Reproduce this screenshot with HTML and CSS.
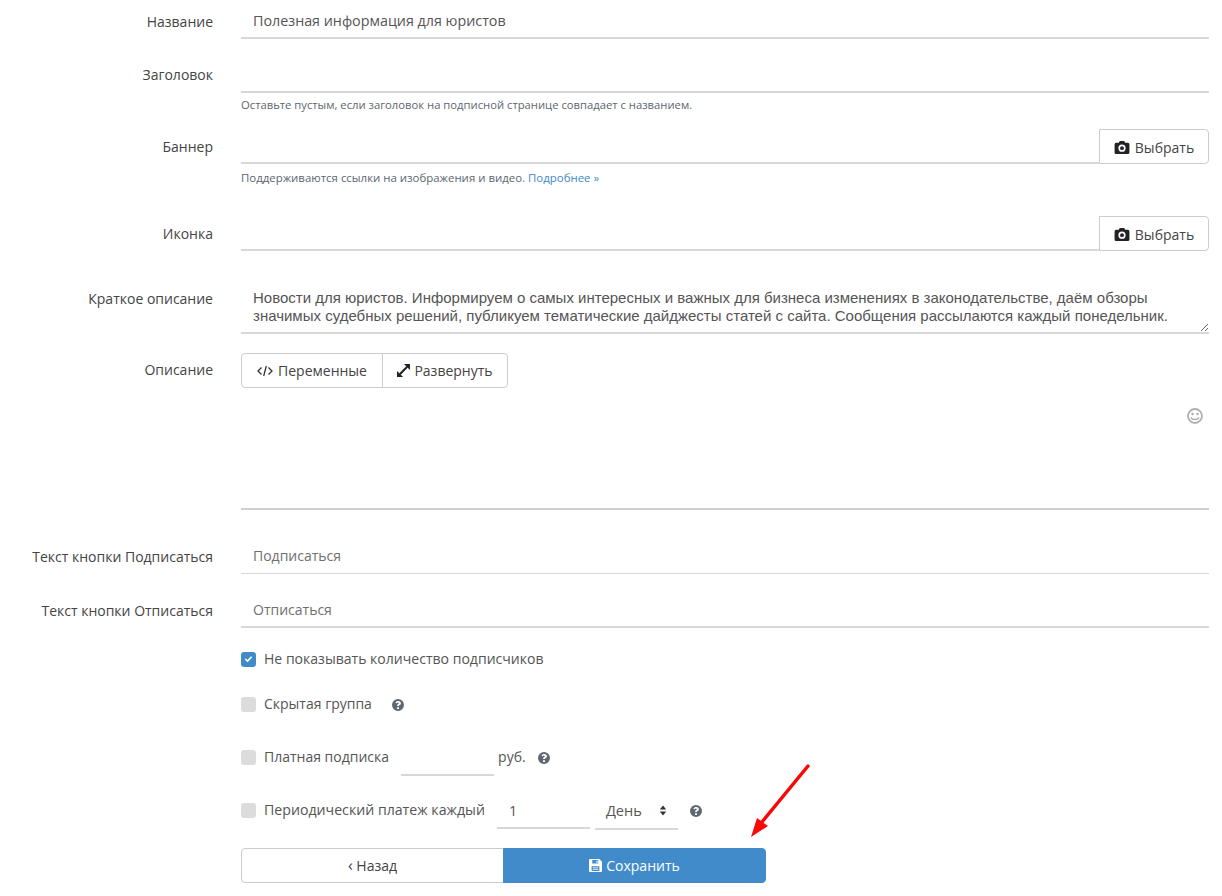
FILE: index.html
```html
<!DOCTYPE html>
<html lang="ru">
<head>
<meta charset="utf-8">
<title>Группа</title>
<link rel="stylesheet" href="styles.css">
</head>
<body>
<svg class="defs" width="0" height="0" aria-hidden="true">
  <symbol id="cam" viewBox="0 0 16 14"><path fill-rule="evenodd" d="M5.600 0h4.800l1 2H14.300a1.700 1.700 0 0 1 1.700 1.700v8.600A1.700 1.700 0 0 1 14.300 14H1.700A1.700 1.700 0 0 1 0 12.300V3.700A1.700 1.700 0 0 1 1.700 2H4.600zM8 3.800a3.900 3.900 0 1 0 0 7.800a3.900 3.900 0 0 0 0-7.800zM8 5.600a2.100 2.100 0 1 1 0 4.200a2.100 2.100 0 0 1 0-4.200z"/></symbol>
  <symbol id="help" viewBox="0 0 12 12"><path fill-rule="evenodd" d="M6 0a6 6 0 1 1 0 12A6 6 0 0 1 6 0zM5 8.300v1.700h2V8.300zM6.100 2C4.800 2 4 2.600 3.400 3.500l1.200.9c.4-.5.700-.8 1.300-.8.500 0 .9.300.9.700 0 .4-.3.600-.8.900-.6.300-1 .8-1 1.500v.4h2v-.3c0-.3.200-.5.600-.7.700-.4 1.300-.9 1.300-1.900C8.900 2.900 7.500 2 6.100 2z"/></symbol>
</svg>
<form class="form">
  <div class="row">
    <label class="label label-low">Название</label>
    <div class="field"><input class="input" type="text" value="Полезная информация для юристов"></div>
  </div>
  <div class="row row-hint">
    <label class="label">Заголовок</label>
    <div class="field">
      <input class="input" type="text">
      <p class="hint">Оставьте пустым, если заголовок на подписной странице совпадает с названием.</p>
    </div>
  </div>
  <div class="row row-banner">
    <label class="label label-low">Баннер</label>
    <div class="field">
      <div class="group">
        <input class="input" type="text">
        <button class="btn pick" type="button"><svg class="i-cam"><use href="#cam"/></svg>Выбрать</button>
      </div>
      <p class="hint hint-wide">Поддерживаются ссылки на изображения и видео. <a href="#">Подробнее »</a></p>
    </div>
  </div>
  <div class="row row-icon">
    <label class="label label-low">Иконка</label>
    <div class="field">
      <div class="group">
        <input class="input" type="text">
        <button class="btn pick" type="button"><svg class="i-cam"><use href="#cam"/></svg>Выбрать</button>
      </div>
    </div>
  </div>
  <div class="row">
    <label class="label label-area">Краткое описание</label>
    <div class="field">
      <textarea class="area">Новости для юристов. Информируем о самых интересных и важных для бизнеса изменениях в законодательстве, даём обзоры значимых судебных решений, публикуем тематические дайджесты статей с сайта. Сообщения рассылаются каждый понедельник.</textarea>
    </div>
  </div>
  <div class="row row-editor">
    <label class="label">Описание</label>
    <div class="field">
      <div class="toolbar">
        <button class="btn tool" type="button">
          <svg class="i-code" viewBox="0 0 16 12"><path d="M4.500 2.500 1 6l3.500 3.500M11.500 2.500 15 6l-3.500 3.500M9.300 1 6.700 11" fill="none" stroke="#333" stroke-width="1.300"/></svg>Переменные</button>
        <button class="btn tool" type="button">
          <svg class="i-exp" viewBox="0 0 14 14"><path d="M7.500 0H14v6.500zM6.500 14H0V7.500z" fill="#222"/><path d="M3 11 11 3" stroke="#222" stroke-width="2.200"/></svg>Развернуть</button>
      </div>
      <div class="editor">
        <svg class="smile" viewBox="0 0 16 16"><circle cx="8" cy="8" r="7" fill="none" stroke="#b0b0b0" stroke-width="1.800"/><circle cx="5.500" cy="6" r="1.200" fill="#aaa"/><circle cx="10.500" cy="6" r="1.200" fill="#aaa"/><path d="M4 9.500c1 2.600 7 2.600 8 0" fill="none" stroke="#aaa" stroke-width="1.300"/></svg>
      </div>
    </div>
  </div>
  <div class="row">
    <label class="label label-low">Текст кнопки Подписаться</label>
    <div class="field"><input class="input input-thin" type="text" placeholder="Подписаться"></div>
  </div>
  <div class="row row-last">
    <label class="label label-low">Текст кнопки Отписаться</label>
    <div class="field"><input class="input" type="text" placeholder="Отписаться"></div>
  </div>
  <div class="options">
    <div class="opt opt-first">
      <span class="check on"><svg viewBox="0 0 10 8"><path d="M1.500 4 4 6.300 8.500 1.500" fill="none" stroke="#fff" stroke-width="1.800"/></svg></span>
      <span class="opt-wide">Не показывать количество подписчиков</span>
    </div>
    <div class="opt opt-hidden">
      <span class="check"></span>
      <span>Скрытая группа</span>
      <svg class="i-help gap-l"><use href="#help"/></svg>
    </div>
    <div class="opt opt-paid">
      <span class="check"></span>
      <span>Платная подписка</span>
      <input class="input small price" type="text">
      <span class="rub">руб.</span>
      <svg class="i-help gap-rub"><use href="#help"/></svg>
    </div>
    <div class="opt opt-period">
      <span class="check"></span>
      <span class="opt-wider">Периодический платеж каждый</span>
      <input class="input small count" type="text" value="1">
      <span class="select">День
        <svg class="i-sort" viewBox="0 0 8 12"><path d="M4 0.500 7.500 5H.5zM4 11.500.5 7h7z" fill="#333"/></svg>
      </span>
      <svg class="i-help gap-sel"><use href="#help"/></svg>
    </div>
  </div>
  <div class="actions">
    <button class="btn back" type="button"><span class="chev">‹</span> Назад</button>
    <button class="btn save" type="button"><svg class="i-save" viewBox="0 0 14 14"><path fill-rule="evenodd" d="M1 0h10l3 3v10a1 1 0 0 1-1 1H1a1 1 0 0 1-1-1V1a1 1 0 0 1 1-1zM3.500 1.200v3.600h6.500V1.200zM8 1.800h1.300v2.400H8zM2.800 7.800v5h8.400v-5z" fill="#fff"/><path d="M4 9.500h6M4 11.200h6" stroke="#dbe8f4" stroke-width="1"/></svg>Сохранить</button>
  </div>
</form>
<svg class="arrow" viewBox="0 0 70 80" aria-hidden="true"><path d="M58 4 12 60" stroke="#f80808" stroke-width="3.500" stroke-linecap="round" fill="none"/><path d="M1 75 7 56 18 64z" fill="#f80808"/></svg>
</body>
</html>
```
FILE: styles.css
```css
* { box-sizing: border-box; }
html, body { margin: 0; padding: 0; background: #fff; }
body {
  position: relative;
  height: 896px;
  overflow: hidden;
  font: 14px/20px "Open Sans", sans-serif;
  color: #555;
}
.defs { position: absolute; }
.form { padding: 4px 13px 0 0; }
.row { display: flex; margin-bottom: 19px; }
.row-hint { margin-bottom: 16px; }
.row-banner { margin-bottom: 30px; }
.row-icon { margin-bottom: 33px; }
.row-editor { margin-bottom: 29px; }
.row-last { margin-bottom: 0; }
.label {
  flex: 0 0 213px;
  margin-right: 28px;
  padding-top: 7px;
  text-align: right;
  color: #444;
}
.label-low { padding-top: 8px; }
.label-area { padding-top: 5px; }
.field { flex: 1; min-width: 0; }
.input {
  display: block;
  width: 100%;
  height: 35px;
  padding: 0 12px 1px;
  border: 0;
  border-bottom: 2px solid #d8d8d8;
  outline: 0;
  background: transparent;
  font: inherit;
  font-size: 14.3px;
  color: #555;
}
.input::placeholder { color: #6f6f6f; opacity: 1; font-size: 14px; }
.input-thin { border-bottom: 1px solid #d8d8d8; }
.hint { margin: 3px 0 0; font-size: 11.25px; line-height: 17px; color: #5c6670; }
.hint-wide { margin-top: 5px; font-size: 11.43px; }
.hint a { color: #4488c8; text-decoration: none; }
.group { display: flex; }
.group .input { flex: 1; min-width: 0; }
.btn {
  border: 1px solid #ccc;
  background: #fff;
  font: inherit;
  color: #444;
  padding: 0;
}
.pick {
  flex: 0 0 110px;
  height: 35px;
  padding-top: 2px;
  border-radius: 0 4px 4px 0;
  display: flex;
  align-items: center;
  justify-content: center;
}
.i-cam { width: 16px; height: 13px; margin-right: 5px; fill: #222; }
.area {
  display: block;
  width: 100%;
  height: 50px;
  padding: 5px 12px 0;
  border: 0;
  border-bottom: 2px solid #d8d8d8;
  outline: 0;
  font: 15px/18px "Liberation Sans", sans-serif;
  color: #555;
  resize: vertical;
}
.toolbar { display: flex; }
.tool {
  height: 35px;
  display: flex;
  align-items: center;
  justify-content: center;
}
.tool:first-child { width: 142px; border-radius: 4px 0 0 4px; }
.tool:last-child { width: 126px; margin-left: -1px; border-radius: 0 4px 4px 0; }
.i-code { width: 16px; height: 12px; margin-right: 5px; }
.i-exp { width: 13px; height: 13px; margin-right: 4px; }
.editor {
  height: 122px;
  border-bottom: 2px solid #d0d0d0;
  display: flex;
  justify-content: flex-end;
  padding: 20px 6px 0 0;
}
.smile { width: 16px; height: 16px; }
.options { padding-left: 241px; }
.opt { display: flex; align-items: center; }
.opt-wide { font-size: 14.05px; }
.opt-wider { font-size: 14.17px; }
.check {
  flex: 0 0 15px;
  width: 15px;
  height: 15px;
  margin-right: 8px;
  border-radius: 3px;
  background: #dcdcdc;
  display: flex;
  align-items: center;
  justify-content: center;
}
.check.on { background: #428bca; }
.check svg { width: 9px; height: 8px; }
.opt-first { padding-top: 16px; height: 46px; }
.opt-hidden { margin-top: 20px; height: 20px; }
.opt-paid { margin-top: 23px; height: 40px; }
.opt-period { margin-top: 13px; height: 40px; }
.small { width: auto; }
.price { width: 93px; margin-left: 12px; margin-top: 3px; }
.rub { margin-left: 4px; }
.count { width: 93px; margin-left: 12px; padding-left: 12px; margin-top: 3px; }
.select {
  width: 83px;
  height: 37px;
  margin-left: 5px;
  margin-top: 3px;
  padding: 0 11px;
  border-bottom: 2px solid #d8d8d8;
  display: flex;
  align-items: center;
  justify-content: space-between;
  font-size: 14.5px;
}
.i-sort { width: 8px; height: 11px; }
.i-help { width: 12px; height: 12px; fill: #5f6770; flex: none; margin-top: 2px; }
.gap-l { margin-left: 20px; }
.gap-rub { margin-left: 12px; }
.gap-sel { margin-left: 12px; }
.actions { display: flex; margin: 18px 0 0 241px; }
.back { height: 35px; width: 263px; border-radius: 4px 0 0 4px; }
.chev { font-size: 16px; }
.save {
  height: 35px;
  width: 263px;
  margin-left: -1px;
  border-radius: 0 4px 4px 0;
  border-color: #428bca;
  background: #428bca;
  color: #fff;
  display: flex;
  align-items: center;
  justify-content: center;
}
.i-save { width: 13px; height: 13px; margin-right: 4px; }
.arrow { position: absolute; left: 750px; top: 762px; width: 70px; height: 80px; }
```
